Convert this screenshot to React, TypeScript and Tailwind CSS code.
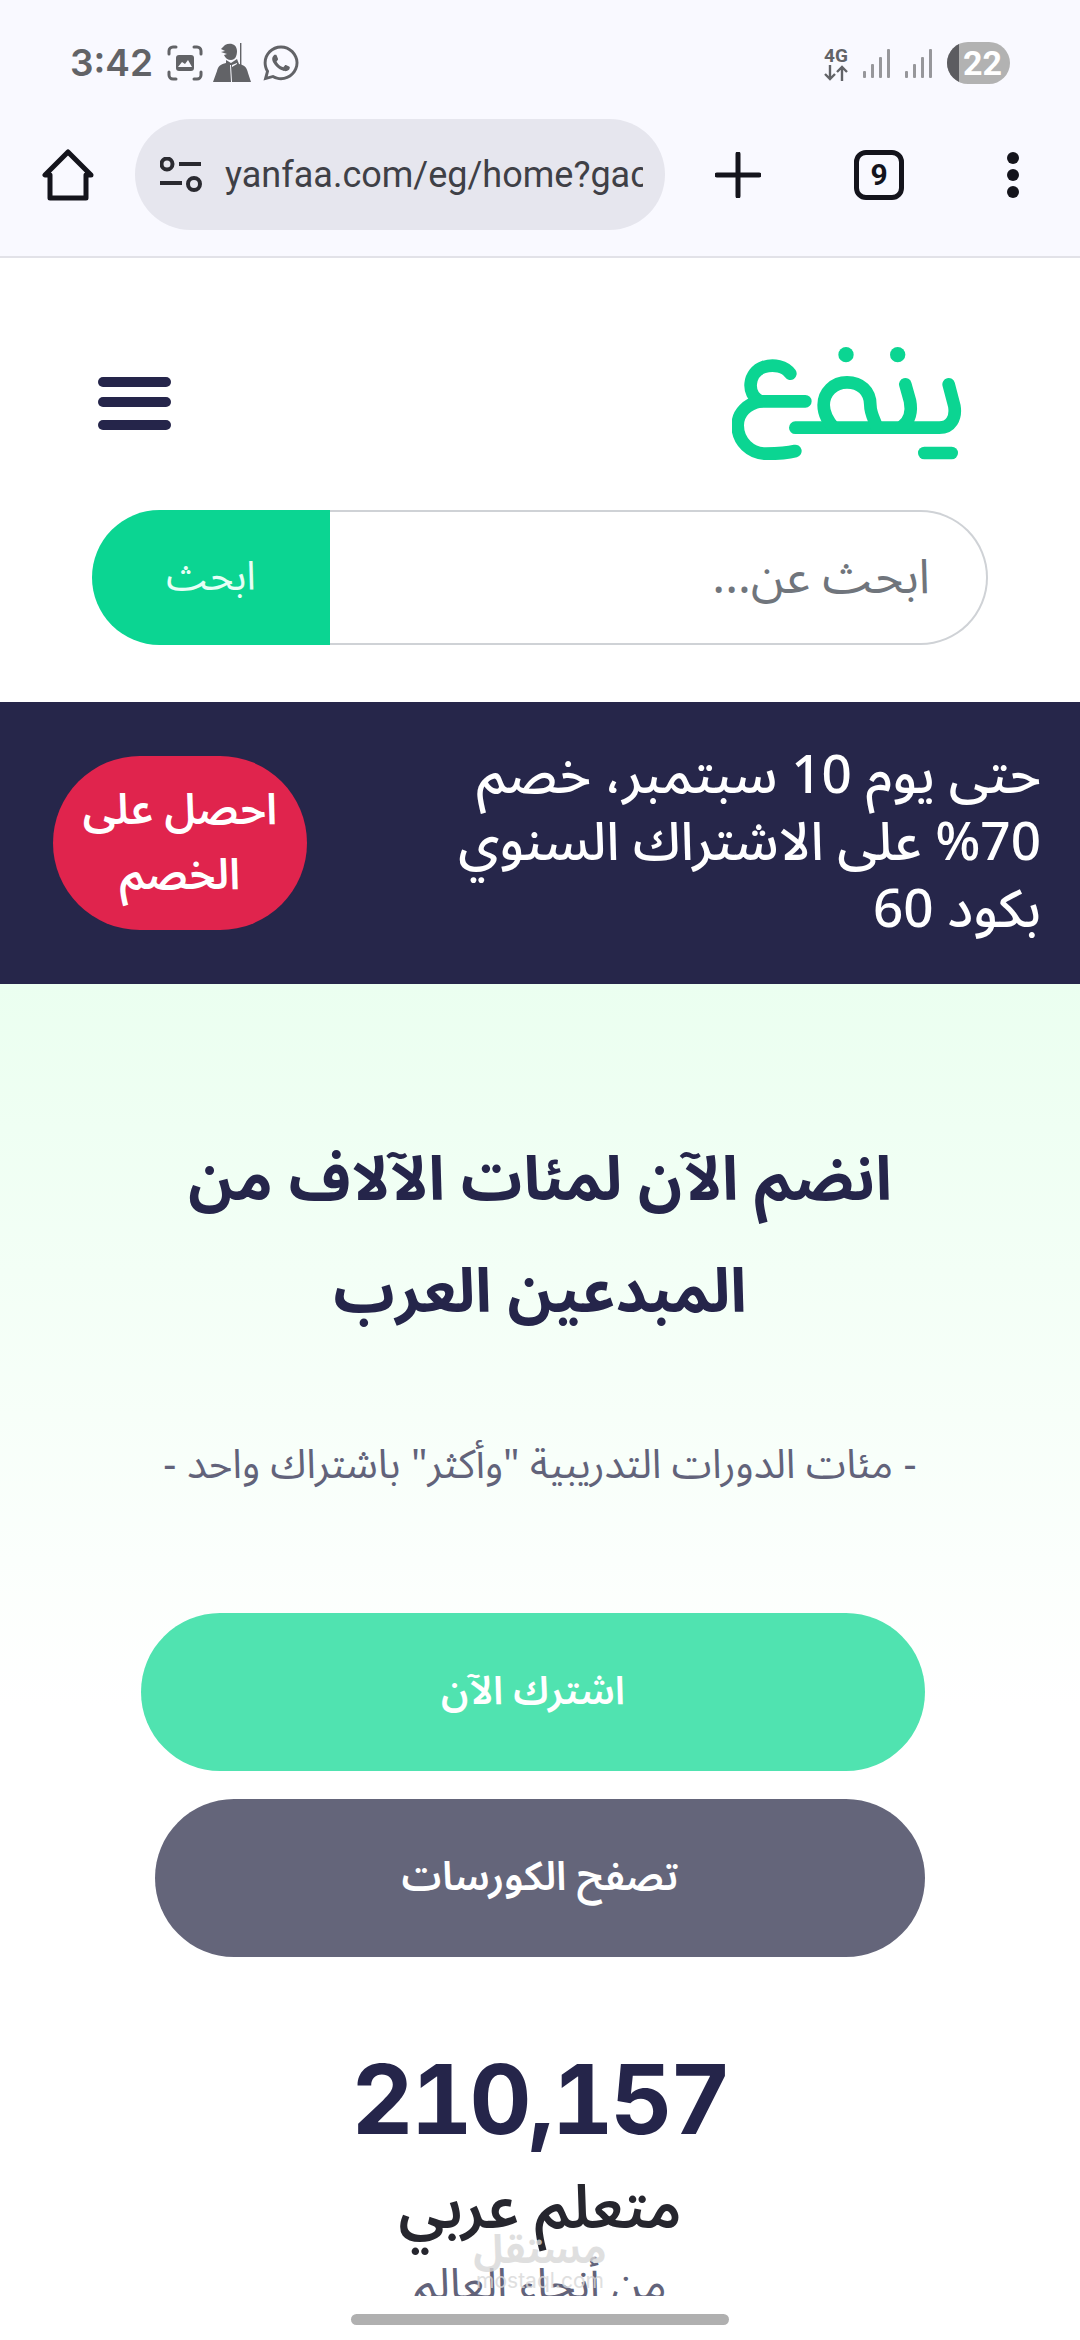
import { FaWhatsapp } from 'react-icons/fa';

const ARABIC = "font-['Noto_Sans_Arabic','IBM_Plex_Sans_Arabic','Noto_Sans','DejaVu_Sans',sans-serif]";

function ScreenshotIcon() {
  return (
    <svg width="36" height="36" viewBox="0 0 36 36" fill="none" stroke="#626367" strokeWidth="3" strokeLinecap="round">
      <path d="M2 9V6a4 4 0 0 1 4-4h3M27 2h3a4 4 0 0 1 4 4v3M34 27v3a4 4 0 0 1-4 4h-3M9 34H6a4 4 0 0 1-4-4v-3" />
      <rect x="9" y="10" width="18" height="16" rx="3" fill="#626367" stroke="none" />
      <path d="M11 22l4-5 3 2 3-4 4 7z" fill="#f9f9ff" stroke="none" />
    </svg>
  );
}

function SoldierIcon() {
  return (
    <svg width="38" height="40" viewBox="0 0 38 40" fill="#626367">
      <path d="M12 2c5-3 12-1 12 6 0 5-2 9-6 9-3 0-6-2-7-5l3-1-6-2 4-1-4-2z" />
      <path d="M27 0h1.4v26H27z" />
      <path d="M13 17l5 3 6-4 2 5c6 1 8 4 9 9l3 9H0l4-11c1-5 4-7 9-8z" />
      <path d="M18 22l1 17h-1l-1-17zM19 22l5-2v1l-5 3z" fill="#f9f9ff" />
    </svg>
  );
}

function NetworkIcon() {
  return (
    <div className="flex w-[26px] flex-col items-center">
      <span className="font-['Roboto',sans-serif] text-[19px] font-bold leading-[19px] text-[#626367]">4G</span>
      <svg width="24" height="16" viewBox="0 0 24 16" fill="none" stroke="#626367" strokeWidth="2.4">
        <path d="M6 0v14M1 9l5 5 5-5M18 16V2M13 7l5-5 5 5" />
      </svg>
    </div>
  );
}

function SignalIcon() {
  return (
    <svg width="28" height="29" viewBox="0 0 28 29" fill="#97979b">
      <rect x="0" y="22" width="3" height="7" rx="1" />
      <rect x="8" y="15" width="3" height="14" rx="1" />
      <rect x="16" y="8" width="3" height="21" rx="1" />
      <rect x="24" y="0" width="3" height="29" rx="1" />
    </svg>
  );
}

function Logo() {
  return (
    <svg width="230" height="114" viewBox="95 77 690 342" fill="none" stroke="#0bd592" strokeWidth="38" strokeLinecap="round" strokeLinejoin="round">
      <path d="M745 192l17 65c6 35-10 65-45 65H285" />
      <path d="M615 192l14 50c6 30 0 60-25 78" />
      <path d="M530 322c-5-20-20-40-20-68 0-42-30-68-70-68s-70 30-70 68c0 30 15 50 30 68" />
      <path d="M270 160c-15-22-50-30-80-20-45 15-55 80-10 103h135" />
      <path d="M180 243c-40 8-68 35-68 72 0 50 40 85 85 85 30 0 65-2 88-8" />
      <path d="M672 398h82" />
      <circle cx="437" cy="103" r="23" fill="#0bd592" stroke="none" />
      <circle cx="592" cy="103" r="23" fill="#0bd592" stroke="none" />
    </svg>
  );
}

export default function App() {
  return (
    <div className="relative h-[2340px] w-[1080px] overflow-hidden bg-white">
      {/* browser chrome */}
      <div className="h-[258px] border-b-2 border-[#e2e2e8] bg-[#f9f9ff]">
        <div className="flex h-[119px] items-start justify-between pl-[70px] pr-[70px] pt-[42px]">
          <div className="flex items-center gap-[10px]">
            <span className="font-['Inter',sans-serif] text-[37px] font-semibold leading-[42px] text-[#626367]">3:42</span>
            <span className="ml-[4px]"><ScreenshotIcon /></span>
            <SoldierIcon />
            <FaWhatsapp className="text-[40px] text-[#626367]" />
          </div>
          <div className="flex items-center gap-[14px]">
            <NetworkIcon />
            <SignalIcon />
            <SignalIcon />
            <div className="relative h-[42px] w-[63px] overflow-hidden rounded-full bg-[#b2b2b2] text-center font-['Roboto',sans-serif] text-[34px] font-bold leading-[42px] text-white">
              <div className="absolute inset-y-0 left-0 w-[12px] bg-[#5c5c60]" />
              <span className="relative ml-[8px]">22</span>
            </div>
          </div>
        </div>
        <div className="flex h-[111px] items-center pl-[42px]">
          <svg width="52" height="52" viewBox="0 0 52 52" fill="none" stroke="#14141c" strokeWidth="5" strokeLinejoin="round">
            <path d="M26 3L3 26h5v23h36V26h5z" />
          </svg>
          <div className="ml-[41px] flex h-[111px] w-[530px] items-center rounded-full bg-[#e6e6ee] pl-[25px] pr-[22px]">
            <svg width="42" height="36" viewBox="0 0 42 36" fill="none" stroke="#2a2a30" strokeWidth="4" className="shrink-0">
              <circle cx="7" cy="7" r="5.5" />
              <path d="M19 7h22M0 26h22" />
              <circle cx="34" cy="27" r="6" />
            </svg>
            <span className="ml-[23px] overflow-hidden whitespace-nowrap font-['Roboto',sans-serif] text-[36px] leading-[44px] text-[#3f4046]">
              yanfaa.com/eg/home?gaclid=abc
            </span>
          </div>
          <svg width="46" height="46" viewBox="0 0 46 46" stroke="#14141c" strokeWidth="5" strokeLinecap="round" className="ml-[50px]">
            <path d="M23 2v42M2 23h42" />
          </svg>
          <div className="ml-[93px] flex h-[50px] w-[50px] items-center justify-center rounded-[12px] border-[5px] border-[#14141c] font-['Roboto',sans-serif] text-[30px] font-bold text-[#14141c]">
            9
          </div>
          <div className="ml-[103px] flex flex-col gap-[5px]">
            <div className="h-[12px] w-[12px] rounded-full bg-[#14141c]" />
            <div className="h-[12px] w-[12px] rounded-full bg-[#14141c]" />
            <div className="h-[12px] w-[12px] rounded-full bg-[#14141c]" />
          </div>
        </div>
      </div>

      {/* site header */}
      <div className="flex h-[444px] flex-col bg-white" dir="rtl">
        <div className="flex items-start justify-between pl-[98px] pr-[118px] pt-[88px]">
          <Logo />
          <div className="mt-[31px] flex w-[73px] flex-col">
            <div className="h-[10px] rounded-full bg-[#25254a]" />
            <div className="mt-[10px] h-[10px] rounded-full bg-[#25254a]" />
            <div className="mt-[13px] h-[10px] rounded-full bg-[#25254a]" />
          </div>
        </div>
        <div className={`mx-[92px] mt-[50px] flex h-[135px] ${ARABIC}`}>
          <div className="flex flex-1 items-center rounded-r-full border-y-2 border-r-2 border-[#cfd2d6] pr-[56px] text-[48px] text-[#70757c]">ابحث عن...</div>
          <div className="flex w-[238px] items-center justify-center rounded-l-full bg-[#0bd592] text-[40px] text-[#e6fff6]">ابحث</div>
        </div>
      </div>

      {/* offer banner */}
      <div className={`flex h-[282px] items-center justify-between bg-[#26264a] pl-[53px] pr-[39px] ${ARABIC}`} dir="rtl">
        <p className="w-[640px] text-[53px] font-medium leading-[67px] text-white">
          حتى يوم 10 سبتمبر، خصم 70% على الاشتراك السنوي بكود 60
        </p>
        <div className="flex h-[174px] w-[254px] items-center justify-center rounded-full bg-[#e0244d] px-[20px] text-center text-[43px] font-semibold leading-[65px] text-white">
          احصل على الخصم
        </div>
      </div>

      {/* hero */}
      <div className={`h-[1313px] bg-gradient-to-b from-[#ebfff0] to-white to-[55%] ${ARABIC}`} dir="rtl">
        <h1 className="mx-auto w-[800px] pt-[141px] text-center text-[61px] font-bold leading-[112px] text-[#25254a]">
          انضم الآن لمئات الآلاف من المبدعين العرب
        </h1>
        <p className="mt-[88px] text-center text-[40.5px] leading-[56px] text-[#62637a]">
          - مئات الدورات التدريبية "وأكثر" باشتراك واحد -
        </p>
        <div className="mt-[120px] flex flex-col items-end gap-[28px] pr-[155px]" dir="ltr">
          <div className="flex h-[158px] w-[784px] items-center justify-center rounded-full bg-[#50e3b0] text-[39px] font-semibold text-white">
            اشترك الآن
          </div>
          <div className="flex h-[158px] w-[770px] items-center justify-center rounded-full bg-[#64657a] text-[40px] font-semibold text-white">
            تصفح الكورسات
          </div>
        </div>
        <div dir="ltr" className="mt-[84px] text-center font-['Inter',sans-serif] text-[96px] font-bold tabular-nums leading-[116px] tracking-[-3px] text-[#25254a]">
          210,157
        </div>
        <p className="mt-[7px] text-center text-[60px] font-semibold leading-[90px] text-[#26262e]">متعلم عربي</p>
        <p className="mt-[1px] text-center text-[44px] leading-[60px] text-[#62637a]">من أنحاء العالم</p>
      </div>

      {/* mostaql watermark */}
      <div className={`absolute left-[465px] top-[2232px] w-[150px] text-center leading-none text-[#d8d8d8] opacity-80 ${ARABIC}`}>
        <div className="text-[40px] font-bold leading-[38px]">مستقل</div>
        <div className="font-['Inter',sans-serif] text-[21px] leading-[22px]">mostaql.com</div>
      </div>

      {/* gesture bar */}
      <div className="absolute inset-x-0 bottom-0 flex h-[44px] justify-center bg-white pt-[18px]">
        <div className="h-[11px] w-[378px] rounded-full bg-[#b0b0b0]" />
      </div>
    </div>
  );
}
